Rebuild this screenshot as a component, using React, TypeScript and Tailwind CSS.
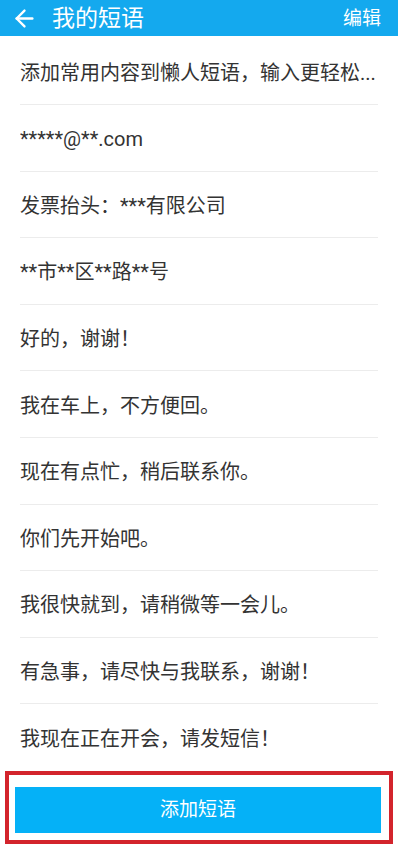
import { ArrowLeft } from 'lucide-react'

const phrases = [
  '添加常用内容到懒人短语，输入更轻松...',
  '*****@**.com',
  '发票抬头：***有限公司',
  '**市**区**路**号',
  '好的，谢谢！',
  '我在车上，不方便回。',
  '现在有点忙，稍后联系你。',
  '你们先开始吧。',
  '我很快就到，请稍微等一会儿。',
  '有急事，请尽快与我联系，谢谢！',
  '我现在正在开会，请发短信！',
]

export default function App() {
  return (
    <div className="flex h-[846px] w-[398px] flex-col bg-white font-['Roboto','Noto_Sans_CJK_SC',sans-serif]">
      {/* top bar */}
      <div className="flex h-[36px] shrink-0 items-center bg-[#14a9ee] pl-[11px] pr-[17px] text-white">
        <ArrowLeft className="h-[27px] w-[27px]" strokeWidth={2.1} />
        <span className="ml-[14px] text-[23px] leading-none">我的短语</span>
        <span className="ml-auto text-[19px] leading-none">编辑</span>
      </div>

      {/* phrase list */}
      <div className="flex flex-col px-[20px]">
        {phrases.map((p, i) => (
          <div
            key={i}
            className={
              (i === 0 ? 'h-[69px] pt-[5px] ' : 'h-[66.6px] pt-[3px] ') +
              (i === phrases.length - 1 ? '' : 'border-b border-[#ececec] ') +
              'flex items-center text-[20px] text-[#333333]'
            }
          >
            <span className="truncate">{p}</span>
          </div>
        ))}
      </div>

      {/* add button, highlighted */}
      <div className="mx-[5px] mt-auto mb-[3px] border-[4px] border-[#d3242c] pt-[12px] pb-[7px] pl-[6px] pr-[8px]">
        <button className="flex h-[46px] w-full items-center justify-center bg-[#05b1f7] text-[19px] text-white">
          添加短语
        </button>
      </div>
    </div>
  )
}
